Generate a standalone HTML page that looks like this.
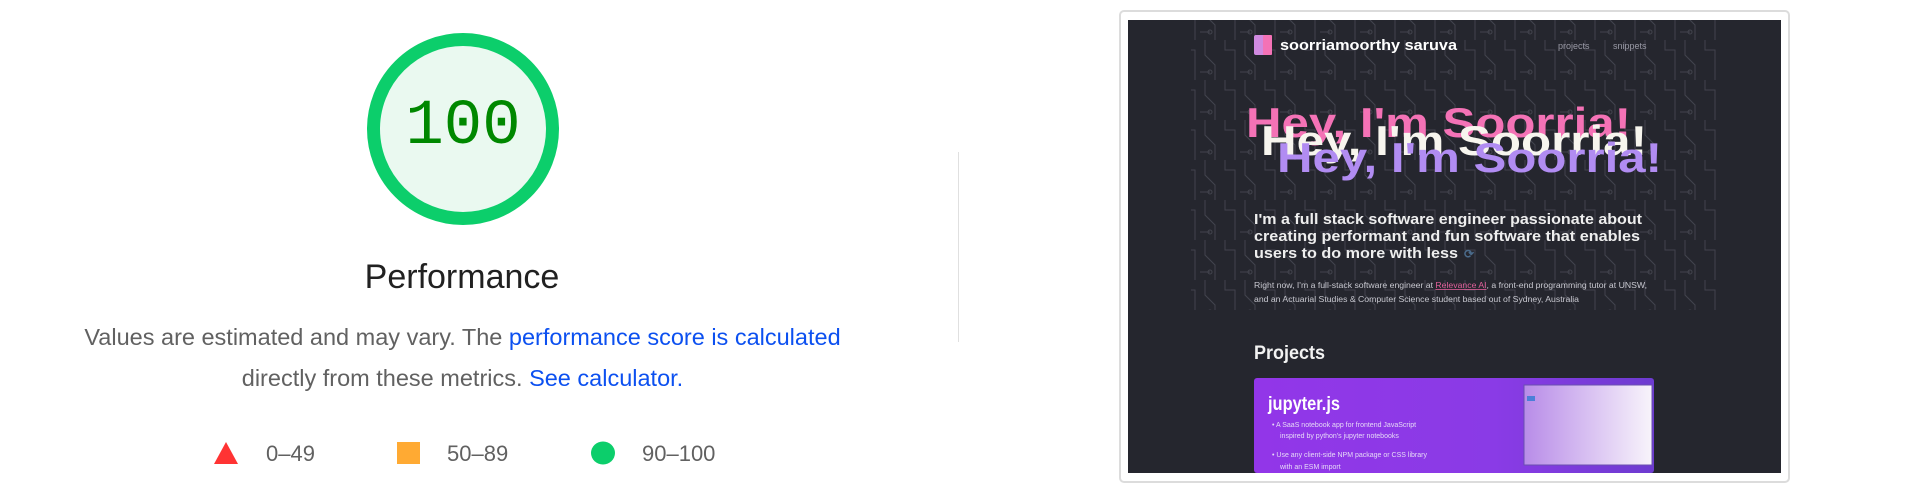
<!DOCTYPE html>
<html><head><meta charset="utf-8"><style>
html,body{margin:0;padding:0;background:#fff;width:1916px;height:494px;overflow:hidden;font-family:"Liberation Sans",Arial,sans-serif}
.abs{position:absolute}
</style></head><body>
<div class="abs" style="left:367px;top:33px;width:166px;height:166px;border:13px solid #0cce6b;border-radius:50%;background:#eaf9f0"></div>
<div class="abs" style="left:367px;top:72px;width:192px;text-align:center;font-family:'Liberation Mono',monospace;font-size:64px;line-height:110px;color:#008800">100</div>
<div class="abs" style="left:262px;top:256px;width:400px;text-align:center;font-size:34px;color:#212121;line-height:42px">Performance</div>
<div class="abs" style="left:0px;top:317px;width:925px;text-align:center;font-size:23.5px;line-height:41px;color:#616161">Values are estimated and may vary. The <span style="color:#0c50f0">performance score is calculated</span><br>directly from these metrics. <span style="color:#0c50f0">See calculator.</span></div>
<svg class="abs" style="left:0;top:0" width="1916" height="494">
<polygon points="226,442 238,464 214,464" fill="#ff3333"/>
<rect x="397" y="442" width="23" height="22" fill="#ffaa33"/>
<ellipse cx="603" cy="453" rx="12" ry="11.5" fill="#0cce6b"/>
<g font-family="Liberation Sans,Arial,sans-serif" font-size="22" fill="#616161">
<text x="266" y="461">0–49</text><text x="447" y="461">50–89</text><text x="642" y="461">90–100</text></g>
<line x1="958.5" y1="152" x2="958.5" y2="342" stroke="#e0e0e0" stroke-width="1"/>
<rect x="1120" y="11" width="669" height="471" rx="4" fill="#fff" stroke="#dcdcdc" stroke-width="2"/>
<rect x="1128" y="20" width="653" height="453" fill="#25262e"/>
<defs>
<pattern id="cp" width="40" height="40" patternUnits="userSpaceOnUse">
<path d="M5 0V15L15 25V40M25 0V10H35V40M0 32H10" stroke="#42434d" stroke-width="1" fill="none"/>
<circle cx="10" cy="32" r="2" fill="none" stroke="#42434d"/>
</pattern>
<linearGradient id="pg" x1="0" x2="1"><stop offset="0" stop-color="#9236e8"/><stop offset="0.6" stop-color="#8a3be6"/><stop offset="1" stop-color="#6d3bd0"/></linearGradient>
<linearGradient id="wg" x1="0" x2="1"><stop offset="0" stop-color="#b88ce8"/><stop offset="1" stop-color="#f8f4fb"/></linearGradient>
</defs>
<rect x="1191" y="20" width="526" height="290" fill="url(#cp)"/>
<rect x="1254" y="35" width="18" height="20" rx="2" fill="#d08ae0"/>
<rect x="1263" y="35" width="9" height="20" rx="1" fill="#f472b6"/>
<g font-family="Liberation Sans,Arial,sans-serif" font-weight="bold">
<text x="1280" y="50" font-size="15" fill="#fff" textLength="177" lengthAdjust="spacingAndGlyphs">soorriamoorthy saruva</text>
<text x="1558" y="49" font-size="9" font-weight="normal" fill="#9a9aa6">projects</text>
<text x="1613" y="49" font-size="9" font-weight="normal" fill="#9a9aa6">snippets</text>
<text x="1246" y="137" font-size="42" fill="#f472b6" textLength="385" lengthAdjust="spacingAndGlyphs">Hey, I'm Soorria!</text>
<text x="1261" y="155" font-size="42" fill="#f7f5ee" textLength="386" lengthAdjust="spacingAndGlyphs">Hey, I'm Soorria!</text>
<text x="1277" y="172" font-size="42" fill="#b18cf2" textLength="385" lengthAdjust="spacingAndGlyphs">Hey, I'm Soorria!</text>
<g font-size="15" fill="#eeeeee">
<text x="1254" y="224" textLength="388" lengthAdjust="spacingAndGlyphs">I'm a full stack software engineer passionate about</text>
<text x="1254" y="241" textLength="386" lengthAdjust="spacingAndGlyphs">creating performant and fun software that enables</text>
<text x="1254" y="258" textLength="204" lengthAdjust="spacingAndGlyphs">users to do more with less</text></g>
<text x="1464" y="258" font-size="12" fill="#4a6a8a">⟳</text>
<g font-size="8" font-weight="normal" fill="#c8c8d0">
<text x="1254" y="288" textLength="393" lengthAdjust="spacingAndGlyphs">Right now, I'm a full-stack software engineer at <tspan fill="#e0609a" text-decoration="underline">Relevance AI</tspan>, a front-end programming tutor at UNSW,</text>
<text x="1254" y="302" textLength="325" lengthAdjust="spacingAndGlyphs">and an Actuarial Studies &amp; Computer Science student based out of Sydney, Australia</text></g>
<text x="1254" y="359" font-size="19" fill="#f2f2f2" textLength="71" lengthAdjust="spacingAndGlyphs">Projects</text>
<rect x="1254" y="378" width="400" height="95" rx="3" fill="url(#pg)"/>
<rect x="1524" y="385" width="128" height="80" fill="url(#wg)" stroke="#6a4fb0" stroke-width="1"/>
<rect x="1527" y="396" width="8" height="5" fill="#4a7fd8"/>
<text x="1268" y="410" font-size="19" fill="#fff" textLength="72" lengthAdjust="spacingAndGlyphs">jupyter.js</text>
<g font-size="7" font-weight="normal" fill="#e6d9f7">
<text x="1272" y="427">•  A SaaS notebook app for frontend JavaScript</text>
<text x="1280" y="438">inspired by python's jupyter notebooks</text>
<text x="1272" y="457">•  Use any client-side NPM package or CSS library</text>
<text x="1280" y="469">with an ESM import</text></g>
</g>
</svg>
</body></html>
